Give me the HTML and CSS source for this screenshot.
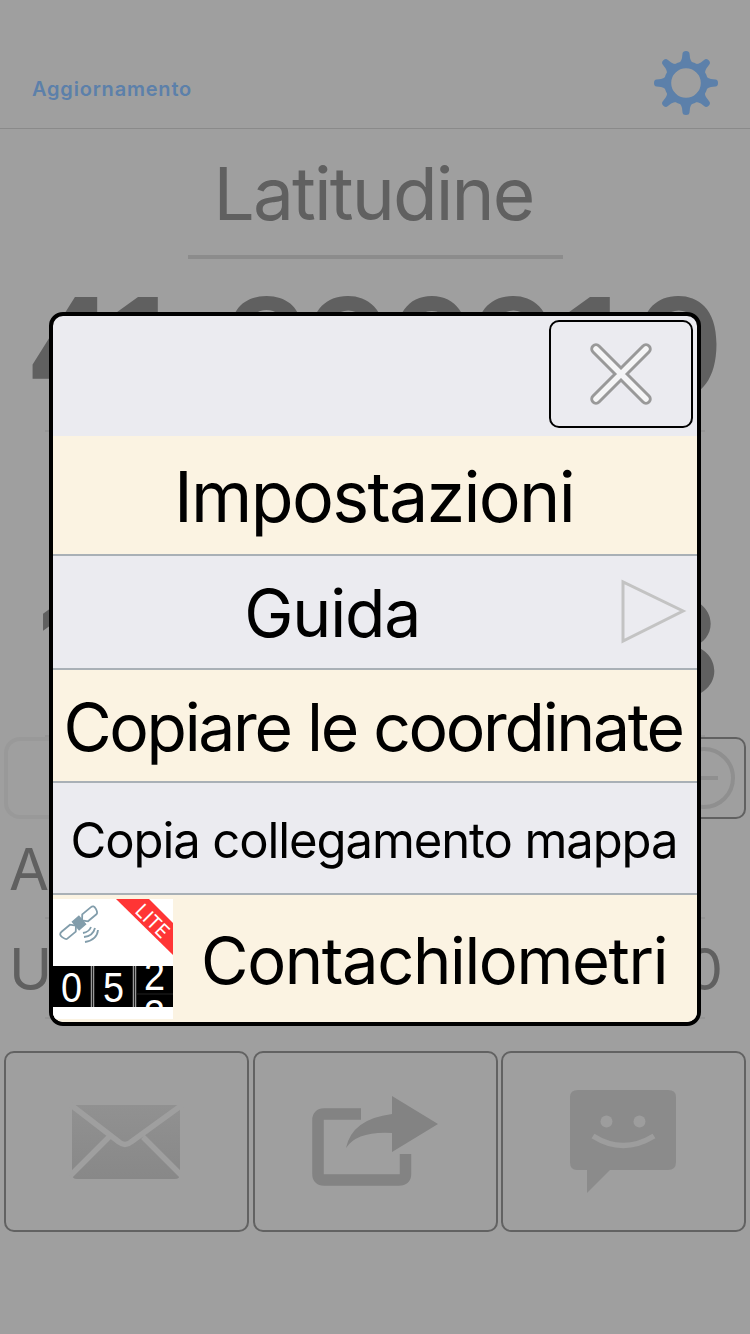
FILE: index.html
```html
<!DOCTYPE html>
<html lang="it">
<head>
<meta charset="utf-8">
<title>Coordinate</title>
<link rel="stylesheet" href="styles.css">
</head>
<body>
<main class="screen">
  <header class="bar">
    <span class="refresh">Aggiornamento</span>
    <svg class="gear" viewBox="-32 -32 64 64" width="64" height="64">
      <defs><path id="tooth" d="M-10-18Q-5-20-4-25L-3.500-29.500Q-3.200-32 0-32Q3.200-32 3.500-29.500L4-25Q5-20 10-18L7-15H-7Z"/></defs>
      <circle r="18.300" fill="none" stroke="#5c80aa" stroke-width="7"/>
      <g fill="#5c80aa">
        <use href="#tooth"/><use href="#tooth" transform="rotate(45)"/><use href="#tooth" transform="rotate(90)"/><use href="#tooth" transform="rotate(135)"/><use href="#tooth" transform="rotate(180)"/><use href="#tooth" transform="rotate(225)"/><use href="#tooth" transform="rotate(270)"/><use href="#tooth" transform="rotate(315)"/>
      </g>
    </svg>
  </header>
  <h1 class="label"><span>Latitudine</span></h1>
  <div class="number first"><span class="degrees">41</span><span class="point">.</span><span>890919</span></div>
  <div class="number second"><span>12.492308</span></div>
  <div class="tools">
    <div class="field"></div>
    <div class="minus"><svg viewBox="0 0 64 64" width="64" height="64" fill="none" stroke="#8f8f8f" stroke-width="4"><circle cx="32" cy="32" r="29"/><path d="M18 32H46"/></svg></div>
  </div>
  <div class="info alt">A</div>
  <div class="info utm"><span>U</span><span>0</span></div>
  <footer class="actions">
    <div class="action">
      <svg viewBox="0 0 246 180" width="246" height="180">
        <defs><linearGradient id="shade" x2="0" y2="1"><stop stop-color="#919191"/><stop offset="1" stop-color="#888"/></linearGradient></defs>
        <path d="M68 54Q68 53 73 53H176V122Q176 127 171 127H73Q68 127 68 122Z" fill="url(#shade)"/>
        <path d="M67 53L115 90Q121 95 127 90L178 53M105 85L66 124M139 85L178 124" fill="none" stroke="#9f9f9f" stroke-width="5.500"/>
      </svg>
    </div>
    <div class="action">
      <svg viewBox="0 0 246 180" width="246" height="180">
        <path d="M109 62H72Q66 62 66 68V122Q66 128 72 128H147Q153.500 128 153.500 122V102" fill="none" stroke="#838383" stroke-width="11.500"/>
        <path d="M140 44L186 72L140 100V81Q105 79 94 96Q100 67 140 62Z" fill="#838383"/>
      </svg>
    </div>
    <div class="action">
      <svg viewBox="0 0 246 180" width="246" height="180">
        <path d="M77 38H167Q175 38 175 45V110Q175 118 167 118H109L86 141V118H76Q69 118 69 110V45Q69 38 77 38Z" fill="#8b8b8b"/>
        <circle cx="105.500" cy="69.500" r="6" fill="#9d9d9d"/><circle cx="138.500" cy="69.500" r="6" fill="#9d9d9d"/>
        <path d="M92 84Q122 103 153 84" fill="none" stroke="#9d9d9d" stroke-width="5.500"/>
      </svg>
    </div>
  </footer>
  <section class="menu">
    <div class="menu-head">
      <div class="close">
        <svg viewBox="0 0 64 64" width="64" height="64" stroke-linecap="round">
          <path d="M7 7L57 57M57 7L7 57" stroke="#999" stroke-width="11.500"/>
          <path d="M7 7L57 57M57 7L7 57" stroke="#f5f5f6" stroke-width="5.500"/>
        </svg>
      </div>
    </div>
    <div class="item settings"><span>Impostazioni</span></div>
    <div class="item guide"><span>Guida</span>
      <svg viewBox="0 0 68 68" width="68" height="68"><path d="M4 4V63L64 33Z" fill="none" stroke="#c3c3c3" stroke-width="3"/></svg>
    </div>
    <div class="item copy"><span>Copiare le coordinate</span></div>
    <div class="item link"><span>Copia collegamento mappa</span></div>
    <div class="item odometer">
      <svg viewBox="0 0 120 120" width="120" height="120">
        <path d="M0 0H120V120H0Z" fill="#fff"/>
        <path d="M63 0H96L120 24V56Z" fill="#ff3535"/>
        <text class="lite" transform="translate(81 13) rotate(45)" textLength="39">LITE</text>
        <g transform="translate(26 24) rotate(-40)" fill="none" stroke="#829dab" stroke-width="1.800">
          <path d="M-4-5H4V5H-4Z" fill="#829dab"/>
          <path d="M4 0L8-4.500H19Q23-4.500 22 0T19 4.500H8ZM-4 0L-8-4.500H-19Q-23-4.500-22 0T-19 4.500H-8Z"/>
        </g>
        <path d="M30 34Q36 33 38 28M31 38Q40 37 42 29M32 43Q44 41 45 31" fill="none" stroke="#829dab" stroke-width="1.800"/>
        <path d="M0 67H120V108H0Z" fill="#000"/>
        <path d="M39.500 67V108M81.500 67V108" stroke="#999" stroke-width="3.500"/>
        <path d="M39.500 67V108M81.500 67V108" stroke="#222" stroke-width="1"/>
        <clipPath id="drum"><path d="M83 67H120V108H83Z"/></clipPath>
        <g class="digits"><text transform="translate(8 103) scale(.9 1)">0</text><text transform="translate(50 103) scale(.9 1)">5</text><g clip-path="url(#drum)"><text transform="translate(91 91) scale(.9 1)">2</text><text transform="translate(91 130) scale(.9 1)">3</text></g></g>
        <path d="M83 95H120" stroke="#222" stroke-width="1"/>
      </svg>
      <span>Contachilometri</span>
    </div>
  </section>
</main>
</body>
</html>
```
FILE: styles.css
```css
* { box-sizing: border-box; }
body { margin: 0; font-family: Inter, "Liberation Sans", sans-serif; }
.screen { position: relative; width: 750px; height: 1334px; overflow: hidden; background: #9f9f9f; color: #606060; display: flex; flex-direction: column; }
.bar { height: 129px; flex: none; display: flex; justify-content: space-between; align-items: flex-start; padding: 51px 32px 0 32px; border-bottom: 1px solid #8a8a8a; }
.refresh { color: #5c80aa; font-size: 20px; font-weight: 600; letter-spacing: 0.8px; line-height: 24px; margin-top: 26px; }
.label { height: 130px; flex: none; margin: 0 auto; width: 375px; border-bottom: 4px solid #8c8c8c; font-size: 73px; font-weight: 400; line-height: 129px; padding-right: 3px; text-align: center; white-space: nowrap; letter-spacing: -1.9px; }
.number { height: 173px; flex: none; margin: 0 45px; border-bottom: 2px solid #969696; display: flex; justify-content: center; font-size: 137px; font-weight: 600; font-variant-numeric: tabular-nums; line-height: 176px; letter-spacing: -6px; white-space: nowrap; }
.first { padding-right: 5px; }
.degrees { letter-spacing: -15px; }
.point { letter-spacing: 11px; }
.second { height: 305px; line-height: 432px; letter-spacing: -4px; font-variant-numeric: normal; padding-left: 4px; }
.tools { display: flex; justify-content: space-between; height: 82px; flex: none; padding: 0 4px; }
.field { width: 244px; border: 4px solid #999; border-radius: 16px; }
.minus { width: 244px; display: flex; justify-content: flex-end; align-items: center; padding-right: 8px; border: 2px solid #616161; border-radius: 10px; }
.info { height: 100px; flex: none; margin: 0 45px; border-bottom: 2px solid #969696; font-size: 58px; line-height: 100px; text-indent: -36px; }
.utm { display: flex; justify-content: space-between; }
.utm span + span { margin-right: -18px; }
.actions { display: grid; grid-template-columns: repeat(3, 245px); gap: 3.500px; padding: 32px 4px 0; }
.action { height: 181px; border: 2px solid #626262; border-radius: 10px; display: flex; justify-content: center; align-items: center; }
.action svg { flex: none; }
.menu { position: absolute; left: 49px; top: 312px; width: 652px; height: 714px; border: 4px solid #000; border-radius: 14px; background: #ebebf0; color: #000; overflow: hidden; }
.menu-head { height: 120px; display: flex; justify-content: flex-end; padding: 4px 4px 0; }
.close { width: 144px; height: 108px; border: 2px solid #000; border-radius: 10px; display: flex; align-items: center; justify-content: center; }
.item { height: 113px; display: flex; justify-content: center; align-items: center; border-bottom: 2px solid #a9b0b6; white-space: nowrap; line-height: 80px; }
.item span { flex: none; }
.settings { height: 120px; background: #fbf3e2; font-size: 70px; letter-spacing: -1.7px; padding: 3px 2px 0 0; }
.guide { height: 114px; font-size: 66px; letter-spacing: -1.2px; justify-content: flex-end; }
.guide svg { margin: 0 10px 0 199px; }
.guide span { padding-top: 2px; }
.copy { background: #fbf3e2; font-size: 66px; letter-spacing: -2.3px; padding: 3px 4px 0 0; }
.link { font-size: 49px; letter-spacing: -1.1px; height: 112px; padding: 6px 2px 0 0; }
.odometer { height: 127px; border-bottom: 0; background: #fbf3e2; font-size: 65px; letter-spacing: -1.350px; justify-content: flex-start; gap: 28px; }
.odometer svg { flex: none; }
.odometer span { padding-top: 4px; }
.lite { font-size: 19px; letter-spacing: 0; fill: #fff; font-family: Inter, sans-serif; }
.digits { font-family: "Liberation Sans", sans-serif; font-size: 42px; letter-spacing: 0; fill: #fff; }
```
